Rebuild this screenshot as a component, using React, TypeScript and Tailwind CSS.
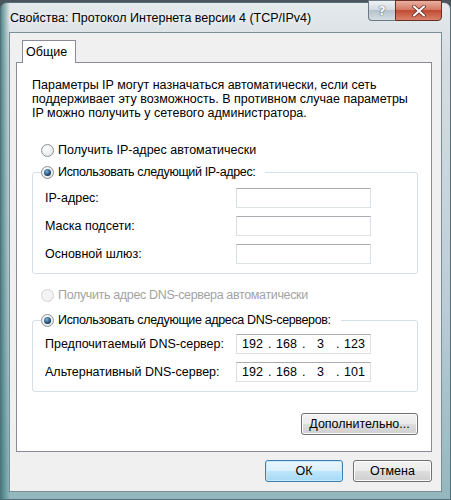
import React from "react";

type RadioProps = { checked?: boolean; disabled?: boolean };

const Radio = ({ checked, disabled }: RadioProps) => (
  <span
    className={`flex h-[13px] w-[13px] shrink-0 items-center justify-center rounded-full border ${
      disabled
        ? "border-[#d2d2d2] bg-[#f3f3f3]"
        : "border-[#8c9297] bg-[radial-gradient(circle_at_40%_35%,#ffffff,#dcdfe2)]"
    }`}
  >
    {checked && (
      <span className="h-[7px] w-[7px] rounded-full bg-[radial-gradient(circle_at_40%_35%,#7fb2dc,#123a5e_70%)]" />
    )}
  </span>
);

const RadioLabel = ({
  checked,
  disabled,
  tight,
  children,
}: RadioProps & { tight?: boolean; children: React.ReactNode }) => (
  <div className={`flex h-[16px] items-center gap-[4px] ${disabled ? "text-[#a3a3a3]" : "text-black"}`}>
    <Radio checked={checked} disabled={disabled} />
    <span className={`whitespace-nowrap ${tight ? "tracking-[-0.35px]" : ""}`}>{children}</span>
  </div>
);

const IpField = ({ value }: { value?: string[] }) => (
  <div className="flex h-[20px] w-[135px] items-center border border-[#dbdfe6] border-t-[#abadb3] bg-white">
    {value &&
      value.map((part, i) => (
        <React.Fragment key={i}>
          {i > 0 && <span className="w-[3px] text-center">.</span>}
          <span className="flex-1 text-center">{part}</span>
        </React.Fragment>
      ))}
  </div>
);

const Row = ({ label, value }: { label: string; value?: string[] }) => (
  <div className="grid grid-cols-[191px_135px] items-center">
    <span>{label}</span>
    <IpField value={value} />
  </div>
);

const Button = ({ children, primary, className = "" }: { children: React.ReactNode; primary?: boolean; className?: string }) => (
  <button
    className={`flex h-[22px] items-center justify-center rounded-[3px] border text-black ${
      primary
        ? "border-[#3c7fb1] bg-[linear-gradient(#eaf6fd,#d9f0fc_50%,#bee6fd_50%,#a7d9f5)] shadow-[inset_0_0_0_1px_#c7e8fa]"
        : "border-[#707070] bg-[linear-gradient(#f2f2f2,#ebebeb_50%,#dddddd_50%,#cfcfcf)] shadow-[inset_0_0_0_1px_#fcfcfc]"
    } ${className}`}
  >
    {children}
  </button>
);

export default function App() {
  return (
    <div className="h-[500px] w-[451px] overflow-hidden bg-[#4a545b] font-['Liberation_Sans',Arial,sans-serif] text-[12.5px] leading-[14px]">
      <div className="mt-[2px] flex h-[498px] flex-col rounded-t-[7px] border border-[#55707a] bg-[linear-gradient(90deg,rgba(38,110,108,0.75),rgba(38,110,108,0)_9px),linear-gradient(180deg,#e4e9ec_0%,#d6dee3_12%,#bccdd6_60%,#93b7bd_100%)] px-[8px] pb-[7px]">
        {/* title bar */}
        <div className="flex h-[29px] items-start justify-between">
          <span className="pl-[1px] pt-[7px] text-[12.5px] leading-[16px] text-black [text-shadow:0_0_6px_#ffffff]">
            Свойства: Протокол Интернета версии 4 (TCP/IPv4)
          </span>
          <div className="-mt-[3px] flex">
            <div className="flex h-[21px] w-[27px] items-center justify-center rounded-bl-[4px] border border-r-0 border-[#6c7a84] bg-[linear-gradient(#eef2f5,#d3dce2_45%,#b6c3cc_50%,#d4dde3)]">
              <span className="font-['DejaVu_Sans',sans-serif] text-[13px] font-bold leading-none text-white [text-shadow:0_0_1px_#3d4a55,0_0_1px_#3d4a55]">?</span>
            </div>
            <div className="flex h-[21px] w-[47px] items-center justify-center rounded-br-[4px] border border-[#6a2d22] bg-[linear-gradient(#eab0a1,#d57a64_45%,#c04a33_50%,#d9826a)]">
              <svg width="14" height="12" viewBox="0 0 14 12">
                <path d="M2 1.5 L12 10.5 M12 1.5 L2 10.5" stroke="#5a1f16" strokeWidth="3.6" strokeLinecap="round" />
                <path d="M2 1.5 L12 10.5 M12 1.5 L2 10.5" stroke="#ffffff" strokeWidth="2.2" strokeLinecap="round" />
              </svg>
            </div>
          </div>
        </div>

        {/* client area */}
        <div className="flex flex-1 flex-col border border-[#7b8d97] bg-[#f0f0f0] pl-[6px] pr-[9px] pt-[7px]">
          {/* tab strip */}
          <div className="relative z-10 -mb-px flex">
            <div className="ml-[6px] flex h-[23px] items-center border border-b-0 border-[#898c95] bg-white pl-[3px] pr-[8px] text-black">
              Общие
            </div>
          </div>

          {/* tab panel */}
          <div className="flex h-[390px] flex-col border border-[#898c95] bg-white pl-[15px] pr-[13px] pt-[15px]">
            <p className="whitespace-nowrap text-black">
              Параметры IP могут назначаться автоматически, если сеть
              <br />
              поддерживает эту возможность. В противном случае параметры
              <br />
              IP можно получить у сетевого администратора.
            </p>

            <div className="ml-[9px] mt-[22px]">
              <RadioLabel>Получить IP-адрес автоматически</RadioLabel>
            </div>

            <fieldset className="mt-[6px] rounded-[3px] border border-[#d5dfe5] pb-[9px] pl-[12px] pt-[8px]">
              <legend className="-ml-[4px] pr-[10px]">
                <RadioLabel checked tight>
                  Использовать следующий IP-адрес:
                </RadioLabel>
              </legend>
              <div className="flex flex-col gap-[8px]">
                <Row label="IP-адрес:" />
                <Row label="Маска подсети:" />
                <Row label="Основной шлюз:" />
              </div>
            </fieldset>

            <div className="ml-[9px] mt-[13px]">
              <RadioLabel disabled tight>
                Получить адрес DNS-сервера автоматически
              </RadioLabel>
            </div>

            <fieldset className="mt-[9px] rounded-[3px] border border-[#d5dfe5] pb-[9px] pl-[12px] pt-[6px]">
              <legend className="-ml-[4px] pr-[10px]">
                <RadioLabel checked tight>
                  Использовать следующие адреса DNS-серверов:
                </RadioLabel>
              </legend>
              <div className="flex flex-col gap-[8px]">
                <Row label="Предпочитаемый DNS-сервер:" value={["192", "168", "3", "123"]} />
                <Row label="Альтернативный DNS-сервер:" value={["192", "168", "3", "101"]} />
              </div>
            </fieldset>

            <div className="mt-[21px] flex justify-end">
              <Button className="w-[117px]">Дополнительно...</Button>
            </div>
          </div>

          {/* dialog buttons */}
          <div className="mt-[8px] flex justify-end gap-[10px]">
            <Button primary className="w-[78px]">
              ОК
            </Button>
            <Button className="w-[79px]">Отмена</Button>
          </div>
        </div>
      </div>
    </div>
  );
}
